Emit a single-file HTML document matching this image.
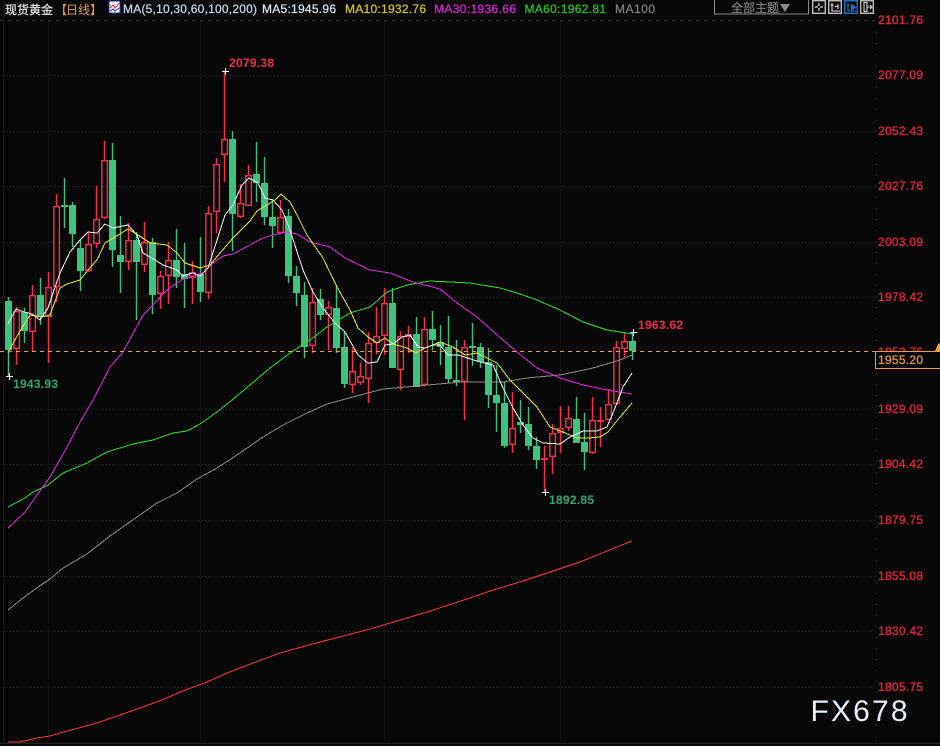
<!DOCTYPE html>
<html>
<head>
<meta charset="utf-8">
<style>
html,body{margin:0;padding:0;background:#070707;width:940px;height:746px;overflow:hidden}
svg{display:block}
text{font-family:"Liberation Sans","Noto Sans CJK SC",sans-serif;font-size:12px;stroke-width:.25}
.ax{fill:#f0233f;stroke:#f0233f}
.c{shape-rendering:crispEdges;fill:none}
.w{fill:none;stroke-width:1.4}
.m{fill:none;stroke-width:1;shape-rendering:crispEdges;stroke-linejoin:round}
</style>
</head>
<body>
<svg width="940" height="746" viewBox="0 0 940 746" xmlns="http://www.w3.org/2000/svg">
<rect width="940" height="746" fill="#070707"/>

<!-- frame / grid -->
<g class="c">
<path d="M0 20.5H875" stroke="#303030" stroke-dasharray="4 4"/>
<path d="M4 75.5H875M4 131.5H875M4 186.5H875M4 242.5H875M4 297.5H875M4 409.5H875M4 464.5H875M4 520.5H875M4 576.5H875M4 631.5H875M4 687.5H875" stroke="#2c2c2c" stroke-dasharray="1 2"/>
<path d="M48.5 22V742M200.5 22V742M384.5 22V742M560.5 22V742" stroke="#262626" stroke-dasharray="1 3"/>
<path d="M3.5 0V743" stroke="#181818"/>
<path d="M0 743.5H940" stroke="#222"/>
<path d="M876.5 32V742" stroke="#3a3a3a" stroke-dasharray="1 10"/>
</g>

<!-- green candles -->
<path class="w" stroke="#3cc47e" d="M8.5 297V376M24.5 308V343M40.5 278V325M64.5 178V228M72.5 202V247M80.5 240V291M112.5 143V267M120.5 216V293M136.5 232V320M152.5 238V314M176.5 229V288M184.5 243V308M200.5 237V302M232.5 131V251M256.5 142V202M264.5 157V225M272.5 199V248M288.5 209V283M296.5 266V306M304.5 282V358M320.5 289V320M336.5 285V353M344.5 331V388M392.5 288V368M416.5 317V387M432.5 311V350M440.5 325V365M448.5 316V383M456.5 340V386M472.5 323V366M480.5 343V368M488.5 348V408M496.5 365V432M504.5 382V448M520.5 400V433M528.5 407V450M536.5 437V469M576.5 397V443M584.5 413V470M632.5 332V360"/>
<path style="shape-rendering:crispEdges" fill="#3cc47e" d="M5 301H12V350H5ZM21 312H28V331H21ZM37 295H44V317H37ZM61 205H68V207H61ZM69 205H76V234H69ZM77 248H84V271H77ZM109 160H116V250H109ZM117 255H124V262H117ZM133 240H140V262H133ZM149 242H156V295H149ZM173 260H180V277H173ZM181 274H188V279H181ZM197 274H204V292H197ZM229 139H236V214H229ZM253 174H260V183H253ZM261 183H268V217H261ZM269 217H276V226H269ZM285 216H292V276H285ZM293 276H300V293H293ZM301 295H308V347H301ZM317 299H324V315H317ZM333 308H340V348H333ZM341 347H348V384H341ZM389 303H396V368H389ZM413 334H420V387H413ZM429 329H436V340H429ZM437 342H444V347H437ZM445 347H452V379H445ZM453 380H460V382H453ZM469 346H476V348H469ZM477 347H484V362H477ZM485 362H492V395H485ZM493 395H500V403H493ZM501 403H508V446H501ZM517 422H524V425H517ZM525 424H532V446H525ZM533 446H540V460H533ZM573 419H580V443H573ZM581 442H588V452H581ZM629 341H636V351H629Z"/>

<!-- red candles -->
<path class="w" stroke="#ff2c4e" d="M16.5 307V311M16.5 349V365M32.5 285V295M32.5 332V352M48.5 272V287M48.5 317V363M56.5 194V206M56.5 287V302M88.5 232V244M88.5 271V272M96.5 186V219M96.5 244V248M104.5 141V160M104.5 218V219M128.5 223V240M128.5 262V270M144.5 222V242M144.5 265V272M160.5 271V276M160.5 294V309M168.5 242V260M168.5 276V304M192.5 261V272M192.5 278V304M208.5 206V213M208.5 293V299M216.5 158V164M216.5 212V233M224.5 71V139M224.5 155V182M240.5 184V203M240.5 217V218M248.5 165V175M280.5 200V217M312.5 288V302M312.5 346V353M328.5 301V307M328.5 315V350M352.5 347V371M352.5 385V393M360.5 363V376M360.5 383V385M368.5 332V343M368.5 379V403M376.5 307V336M376.5 343V354M384.5 288V303M384.5 336V355M400.5 331V336M400.5 370V390M408.5 326V334M408.5 337V353M424.5 317V329M424.5 385V386M464.5 340V347M464.5 382V420M512.5 392V428M512.5 445V453M544.5 446V492M552.5 424V433M552.5 457V474M560.5 406V428M560.5 433V453M568.5 406V418M568.5 428V431M592.5 397V420M592.5 453V454M600.5 407V447M608.5 389V404M616.5 341V347M624.5 332V341M624.5 349V357"/>
<g class="w" stroke="#ff2c4e" stroke-width="1.5" transform="translate(0.1 0)">
<path d="M13.7 311.7H19.3V348.3H13.7ZM29.7 295.7H35.3V331.3H29.7ZM45.7 287.7H51.3V316.3H45.7ZM53.7 206.7H59.3V286.3H53.7ZM85.7 244.7H91.3V270.3H85.7ZM93.7 219.7H99.3V243.3H93.7ZM101.7 160.7H107.3V217.3H101.7ZM125.7 240.7H131.3V261.3H125.7ZM141.7 242.7H147.3V264.3H141.7ZM157.7 276.7H163.3V293.3H157.7ZM165.7 260.7H171.3V275.3H165.7ZM189.7 272.7H195.3V277.3H189.7ZM205.7 213.7H211.3V292.3H205.7ZM213.7 164.7H219.3V211.3H213.7ZM221.7 139.7H227.3V154.3H221.7ZM237.7 203.7H243.3V216.3H237.7ZM245.7 175.7H251.3V205.3H245.7ZM277.7 217.7H283.3V232.3H277.7ZM309.7 302.7H315.3V345.3H309.7ZM325.7 307.7H331.3V314.3H325.7ZM349.7 371.7H355.3V384.3H349.7ZM357.7 376.7H363.3V382.3H357.7ZM365.7 343.7H371.3V378.3H365.7ZM373.7 336.7H379.3V342.3H373.7ZM381.7 303.7H387.3V335.3H381.7ZM397.7 336.7H403.3V369.3H397.7ZM405.7 334.7H411.3V336.3H405.7ZM421.7 329.7H427.3V384.3H421.7ZM461.7 347.7H467.3V381.3H461.7ZM509.7 428.7H515.3V444.3H509.7ZM541.7 458.7H547.3V459.3H541.7ZM549.7 433.7H555.3V456.3H549.7ZM557.7 428.7H563.3V432.3H557.7ZM565.7 418.7H571.3V427.3H565.7ZM589.7 420.7H595.3V452.3H589.7ZM597.7 420.7H603.3V421.3H597.7ZM605.7 404.7H611.3V419.3H605.7ZM613.7 347.7H619.3V403.3H613.7ZM621.7 341.7H627.3V348.3H621.7Z"/>
</g>

<!-- moving averages -->
<polyline class="m" stroke="#ff3535" points="8,742 20,742 37,738 50,736 60,733 97,723 123,714 140,708 167,698 180,692 207,682 227,673 253,663 280,653 320,642 370,629 387,624 427,612 467,599 490,591 520,582 547,573 580,562 597,555 632,541"/>
<polyline class="m" stroke="#8c8c8c" points="8,610 23,598 38,587 50,579 63,568 87,554 110,536 137,517 157,503 177,493 197,479 217,468 237,455 263,437 283,425 307,413 327,404 353,397 383,389 417,386 450,383 460,382 503,382 527,378 560,375 593,368 620,360 632,355"/>
<polyline class="m" stroke="#26e026" points="8,507 25,498 33,492 48,485 63,473 87,463 107,452 133,444 153,440 173,433 187,431 200,424 217,412 232,400 250,385 270,368 290,353 310,340 327,327 350,313 370,307 387,292 407,285 430,281 450,282 470,283 500,288 520,294 537,300 560,310 583,322 607,330 632,334"/>
<polyline class="m" stroke="#e425e4" points="8,528 25,512 37,495 50,477 67,447 80,422 93,400 110,367 123,352 143,315 150,308 167,290 183,279 203,273 213,263 223,256 233,254 250,245 263,238 277,234 287,232 297,234 310,242 330,247 345,258 370,270 390,273 413,282 440,289 457,303 477,317 497,335 517,352 537,368 560,378 583,385 607,390 632,394"/>
<polyline class="m" stroke="#ecec18" points="8,353 17,336 30,315 42,317 50,315 60,288 67,284 80,280 88,270 97,260 105,243 115,237 128,229 138,235 150,243 167,245 177,253 185,263 200,268 210,265 220,253 233,238 250,221 257,211 267,205 275,200 281,194 290,202 297,215 307,235 323,258 337,287 350,310 358,328 368,337 377,343 385,338 393,344 407,348 416,353 425,348 440,342 453,347 465,355 477,353 497,363 510,380 527,397 537,407 550,427 563,432 577,438 588,438 600,437 608,432 620,417 632,403"/>
<polyline class="m" stroke="#f8f8f8" points="8,324 16,309 24,312 32,314 40,320 48,308 54,290 60,273 70,252 80,240 88,232 97,233 105,224 113,228 128,225 137,235 143,253 150,257 163,265 177,270 183,276 193,273 200,276 208,268 218,237 225,215 233,205 242,185 249,178 258,183 265,198 273,200 282,210 290,230 303,270 313,292 323,308 335,323 345,332 358,355 368,363 377,362 385,345 393,344 402,337 410,335 418,347 425,348 433,345 440,345 448,355 458,355 477,361 493,365 503,388 513,408 523,425 533,438 543,443 560,444 570,437 583,431 597,431 607,427 615,408 623,387 632,373"/>

<!-- last price line -->
<path class="c" stroke="#f0a040" d="M0 351.5H875" stroke-dasharray="4 4"/>

<!-- high / low markers -->
<path class="c" stroke="#fff" d="M222 71.5H229M225.5 68V75M6 376.5H13M9.5 373V380M542 492.5H549M545.5 489V496M630 332.5H637M633.5 329V336"/>
<g font-weight="bold">
<text x="229" y="67" fill="#ec2c48" textLength="45">2079.38</text>
<text x="13" y="388" fill="#2fa878" textLength="45">1943.93</text>
<text x="549" y="504" fill="#2fa878" textLength="45">1892.85</text>
<text x="638" y="329" fill="#ec2c48" textLength="45">1963.62</text>
</g>

<!-- axis labels -->
<text class="ax" x="878" y="24" textLength="45">2101.76</text>
<text class="ax" x="878" y="79" textLength="45">2077.09</text>
<text class="ax" x="878" y="135" textLength="45">2052.43</text>
<text class="ax" x="878" y="190" textLength="45">2027.76</text>
<text class="ax" x="878" y="246" textLength="45">2003.09</text>
<text class="ax" x="878" y="301" textLength="45">1978.42</text>
<text class="ax" x="878" y="356" textLength="45">1953.76</text>
<text class="ax" x="878" y="413" textLength="45">1929.09</text>
<text class="ax" x="878" y="468" textLength="45">1904.42</text>
<text class="ax" x="878" y="524" textLength="45">1879.75</text>
<text class="ax" x="878" y="580" textLength="45">1855.08</text>
<text class="ax" x="878" y="635" textLength="45">1830.42</text>
<text class="ax" x="878" y="691" textLength="45">1805.75</text>

<!-- price tag -->
<rect x="875.5" y="351.5" width="70" height="17" fill="#050505" stroke="#f0a040" style="shape-rendering:crispEdges"/>
<text x="878" y="364" fill="#e89a3c" stroke="#e89a3c" textLength="45">1955.20</text>
<path d="M935 351L938 344L940 343V351Z" fill="#f0a040"/>

<!-- header legend -->
<text x="5" y="14" fill="#e0e0e0" stroke="#e0e0e0">现货黄金</text>
<text x="55" y="14" fill="#e89a3c">【</text>
<text x="66" y="14" fill="#e0a050">日线</text>
<text x="90" y="14" fill="#e89a3c">】</text>
<rect x="109" y="1" width="11" height="12" fill="#f4f4ff" stroke="#2030a0" style="shape-rendering:crispEdges"/>
<path d="M110 8L113 5L115 8L119 3" stroke="#e02020" fill="none"/>
<path d="M110 11L113 9L115 11L119 8" stroke="#2030c0" fill="none"/>
<text x="123" y="13" fill="#c3d9ee" stroke="#c3d9ee" textLength="134">MA(5,10,30,60,100,200)</text>
<text x="262" y="13" fill="#d8e4f0" stroke="#d8e4f0" textLength="74">MA5:1945.96</text>
<text x="345" y="13" fill="#d4c810" stroke="#d4c810" textLength="81">MA10:1932.76</text>
<text x="434" y="13" fill="#e020d8" stroke="#e020d8" textLength="82">MA30:1936.66</text>
<text x="524.5" y="13" fill="#20c820" stroke="#20c820" textLength="81.5">MA60:1962.81</text>
<text x="615" y="13" fill="#808080" stroke="#808080" textLength="40">MA100</text>

<!-- top right controls -->
<rect x="714.5" y="-1" width="94" height="15" fill="none" stroke="#8a8a8a" style="shape-rendering:crispEdges"/>
<text x="731" y="12" fill="#7c7c7c" stroke="#7c7c7c">全部主题</text>
<path d="M780 4H790L785 12Z" fill="#8a8a8a"/>
<g fill="none" stroke="#bdbdbd" stroke-width="1.4">
<rect x="812.7" y="0.7" width="12.6" height="12.6"/>
<rect x="828.7" y="0.7" width="12.6" height="12.6"/>
<rect x="860.7" y="0.7" width="12.6" height="12.6"/>
<path d="M815 7H818M820 7H823M819 3V6M819 8V11" stroke="#e0e0e0" stroke-width="1.2"/>
<path d="M832 3V11H840M830.5 5H833.5M838 4V9M835 6.5H837.5" stroke="#e0e0e0" stroke-width="1.1"/>
<path d="M864 2.5H867V11.5H864ZM867 7H872M870 5L872 7L870 9" stroke="#d8d8d8" stroke-width="1.1"/>
<rect x="844.7" y="0.7" width="12.6" height="12.6" stroke="#1878c8"/>
<path d="M848 3V11H856M846.5 5H849.5" stroke="#1878c8" stroke-width="1.1"/>
</g>
<path d="M851 3.5L856.5 7.5L851 11Z" fill="#1878c8"/>

<!-- watermark -->
<text x="810.5" y="721" fill="#e6eef7" style="font-size:30px;stroke-width:0" textLength="97">FX678</text>
</svg>
</body>
</html>
